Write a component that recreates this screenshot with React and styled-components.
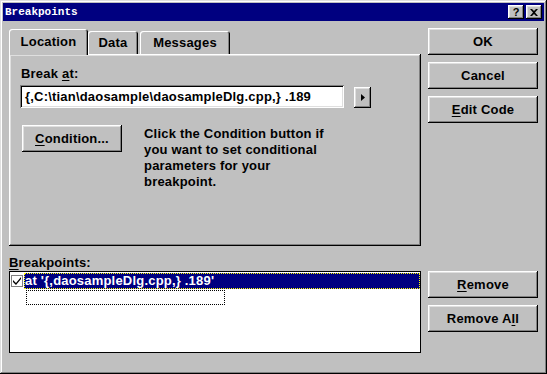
import React from 'react';
import styled, { createGlobalStyle } from 'styled-components';

const GlobalStyle = createGlobalStyle`
  html, body {
    margin: 0;
    padding: 0;
    background: #c0c0c0;
  }
  body {
    font-family: "Liberation Sans", Arial, sans-serif;
    font-size: 13px;
    font-weight: bold;
    letter-spacing: 0.2px;
    color: #000;
  }
`;

const raised = `
  box-shadow: inset -1px -1px #000, inset 1px 1px #fff,
    inset -2px -2px #808080, inset 2px 2px #dfdfdf;
`;

const Window = styled.div`
  width: 547px;
  height: 374px;
  box-sizing: border-box;
  padding: 3px;
  background: #c0c0c0;
  box-shadow: inset -1px -1px #000, inset 1px 1px #dfdfdf,
    inset -2px -2px #808080, inset 2px 2px #fff;
`;

const TitleBar = styled.div`
  height: 18px;
  background: #000080;
  display: flex;
  align-items: center;
  padding: 0 2px;
  color: #fff;
`;

const Title = styled.span`
  font-family: "Liberation Mono", "DejaVu Sans Mono", monospace;
  font-size: 11px;
  font-weight: bold;
  letter-spacing: 0;
`;

const CaptionButtons = styled.div`
  margin-left: auto;
  display: flex;
  gap: 2px;
`;

const CaptionButton = styled.div`
  width: 16px;
  height: 14px;
  background: #c0c0c0;
  ${raised}
  color: #000;
  display: flex;
  align-items: center;
  justify-content: center;
  font-size: 11px;
  font-weight: bold;
  letter-spacing: 0;
  line-height: 1;
`;

const Main = styled.div`
  display: grid;
  grid-template-columns: 412px 110px;
  column-gap: 7px;
  padding: 7px 5px 0 6px;
`;

const TabArea = styled.div`
  margin-top: 1px;
  display: flex;
  flex-direction: column;
`;

const TabStrip = styled.div`
  height: 25px;
  display: flex;
  align-items: flex-end;
  position: relative;
  z-index: 1;
`;

const Tab = styled.div`
  box-sizing: border-box;
  width: ${(p) => p.$w}px;
  height: ${(p) => (p.$active ? 26 : 23)}px;
  margin-bottom: ${(p) => (p.$active ? -1 : 0)}px;
  margin-right: ${(p) => p.$mr || 0}px;
  background: #c0c0c0;
  border-radius: 3px 3px 0 0;
  box-shadow: inset 1px 1px #fff, inset -1px 0 #000, inset -2px 0 #808080;
  display: flex;
  align-items: center;
  justify-content: center;
  padding-bottom: ${(p) => (p.$active ? 2 : 0)}px;
`;

const Panel = styled.div`
  box-sizing: border-box;
  height: 192px;
  padding: 12px 11px 0 11px;
  ${raised}
`;

const Label = styled.div`
  line-height: 15px;
  margin-left: 1px;
`;

const SectionLabel = styled.div`
  grid-column: 1;
  box-sizing: border-box;
  height: 25px;
  padding-top: 9px;
  line-height: 15px;
`;

const Key = styled.span`
  text-decoration: underline;
  text-underline-offset: 2px;
`;

const InputRow = styled.div`
  display: flex;
  align-items: flex-end;
  margin-top: 4px;
`;

const TextField = styled.div`
  box-sizing: border-box;
  width: 324px;
  height: 23px;
  background: #fff;
  box-shadow: inset 1px 1px #808080, inset -1px -1px #fff,
    inset 2px 2px #000, inset -2px -2px #dfdfdf;
  padding: 4px 0 0 5px;
  white-space: nowrap;
  overflow: hidden;
  line-height: 15px;
`;

const ArrowButton = styled.div`
  box-sizing: border-box;
  width: 17px;
  height: 21px;
  margin-left: 10px;
  ${raised}
  display: flex;
  align-items: center;
  justify-content: center;
`;

const ConditionRow = styled.div`
  display: flex;
  align-items: flex-start;
  margin-top: 17px;
`;

const Button = styled.div`
  box-sizing: border-box;
  width: ${(p) => p.$w || 110}px;
  height: 27px;
  margin-left: ${(p) => p.$ml || 0}px;
  background: #c0c0c0;
  ${raised}
  display: flex;
  align-items: center;
  justify-content: center;
  line-height: 15px;
`;

const Description = styled.div`
  margin-left: 22px;
  margin-top: 1px;
  line-height: 16px;
`;

const ButtonColumn = styled.div`
  display: flex;
  flex-direction: column;
  gap: 7px;
  align-self: start;
`;

const ListBox = styled.div`
  grid-column: 1;
  box-sizing: border-box;
  height: 82px;
  background: #fff;
  border: 1px solid #000;
  padding: 1px 0 0 1px;
`;

const ListRow = styled.div`
  display: flex;
  align-items: center;
  height: 16px;
`;

const Check = styled.div`
  box-sizing: border-box;
  width: 12px;
  height: 12px;
  border: 1px solid #808080;
  background: #fff;
  display: flex;
  align-items: center;
  justify-content: center;
`;

const Selected = styled.div`
  flex: 1;
  height: 16px;
  box-sizing: border-box;
  margin-left: 1px;
  background: #000080;
  color: #fff;
  outline: 1px dotted #ffff00;
  outline-offset: -1px;
  line-height: 16px;
  padding-left: 1px;
  white-space: nowrap;
`;

const EditBox = styled.div`
  width: 197px;
  height: 13px;
  margin: 1px 0 0 15px;
  border: 1px dotted #000;
`;

export default function App() {
  return (
    <>
      <GlobalStyle />
      <Window>
        <TitleBar>
          <Title>Breakpoints</Title>
          <CaptionButtons>
            <CaptionButton>?</CaptionButton>
            <CaptionButton>
              <svg width="8" height="7" viewBox="0 0 8 7">
                <path d="M0 0h2l2 2 2-2h2L5 3.5 8 7H6L4 5 2 7H0l3-3.5z" fill="#000" />
              </svg>
            </CaptionButton>
          </CaptionButtons>
        </TitleBar>
        <Main>
          <TabArea>
            <TabStrip>
              <Tab $active $w={79}>Location</Tab>
              <Tab $w={50} $mr={2}>Data</Tab>
              <Tab $w={90}>Messages</Tab>
            </TabStrip>
            <Panel>
              <Label>
                Break <Key>a</Key>t:
              </Label>
              <InputRow>
                <TextField>{'{,C:\\tian\\daosample\\daosampleDlg.cpp,} .189'}</TextField>
                <ArrowButton>
                  <svg width="4" height="7" viewBox="0 0 4 7">
                    <path d="M0 0L4 3.5L0 7z" fill="#000" />
                  </svg>
                </ArrowButton>
              </InputRow>
              <ConditionRow>
                <Button $w={100} $ml={2}>
                  <span>
                    <Key>C</Key>ondition...
                  </span>
                </Button>
                <Description>
                  Click the Condition button if
                  <br />
                  you want to set conditional
                  <br />
                  parameters for your
                  <br />
                  breakpoint.
                </Description>
              </ConditionRow>
            </Panel>
          </TabArea>
          <ButtonColumn>
            <Button>OK</Button>
            <Button>Cancel</Button>
            <Button>
              <span>
                <Key>E</Key>dit Code
              </span>
            </Button>
          </ButtonColumn>
          <SectionLabel>
            <Key>B</Key>reakpoints:
          </SectionLabel>
          <ListBox>
            <ListRow>
              <Check>
                <svg width="8" height="8" viewBox="0 0 8 8">
                  <path d="M0 3l3 3 5-6v2L3 8 0 5z" fill="#000" />
                </svg>
              </Check>
              <Selected>at '{'{'},daosampleDlg.cpp,{'}'} .189'</Selected>
            </ListRow>
            <EditBox />
          </ListBox>
          <ButtonColumn>
            <Button>
              <span>
                <Key>R</Key>emove
              </span>
            </Button>
            <Button>
              <span>
                Remove A<Key>l</Key>l
              </span>
            </Button>
          </ButtonColumn>
        </Main>
      </Window>
    </>
  );
}
